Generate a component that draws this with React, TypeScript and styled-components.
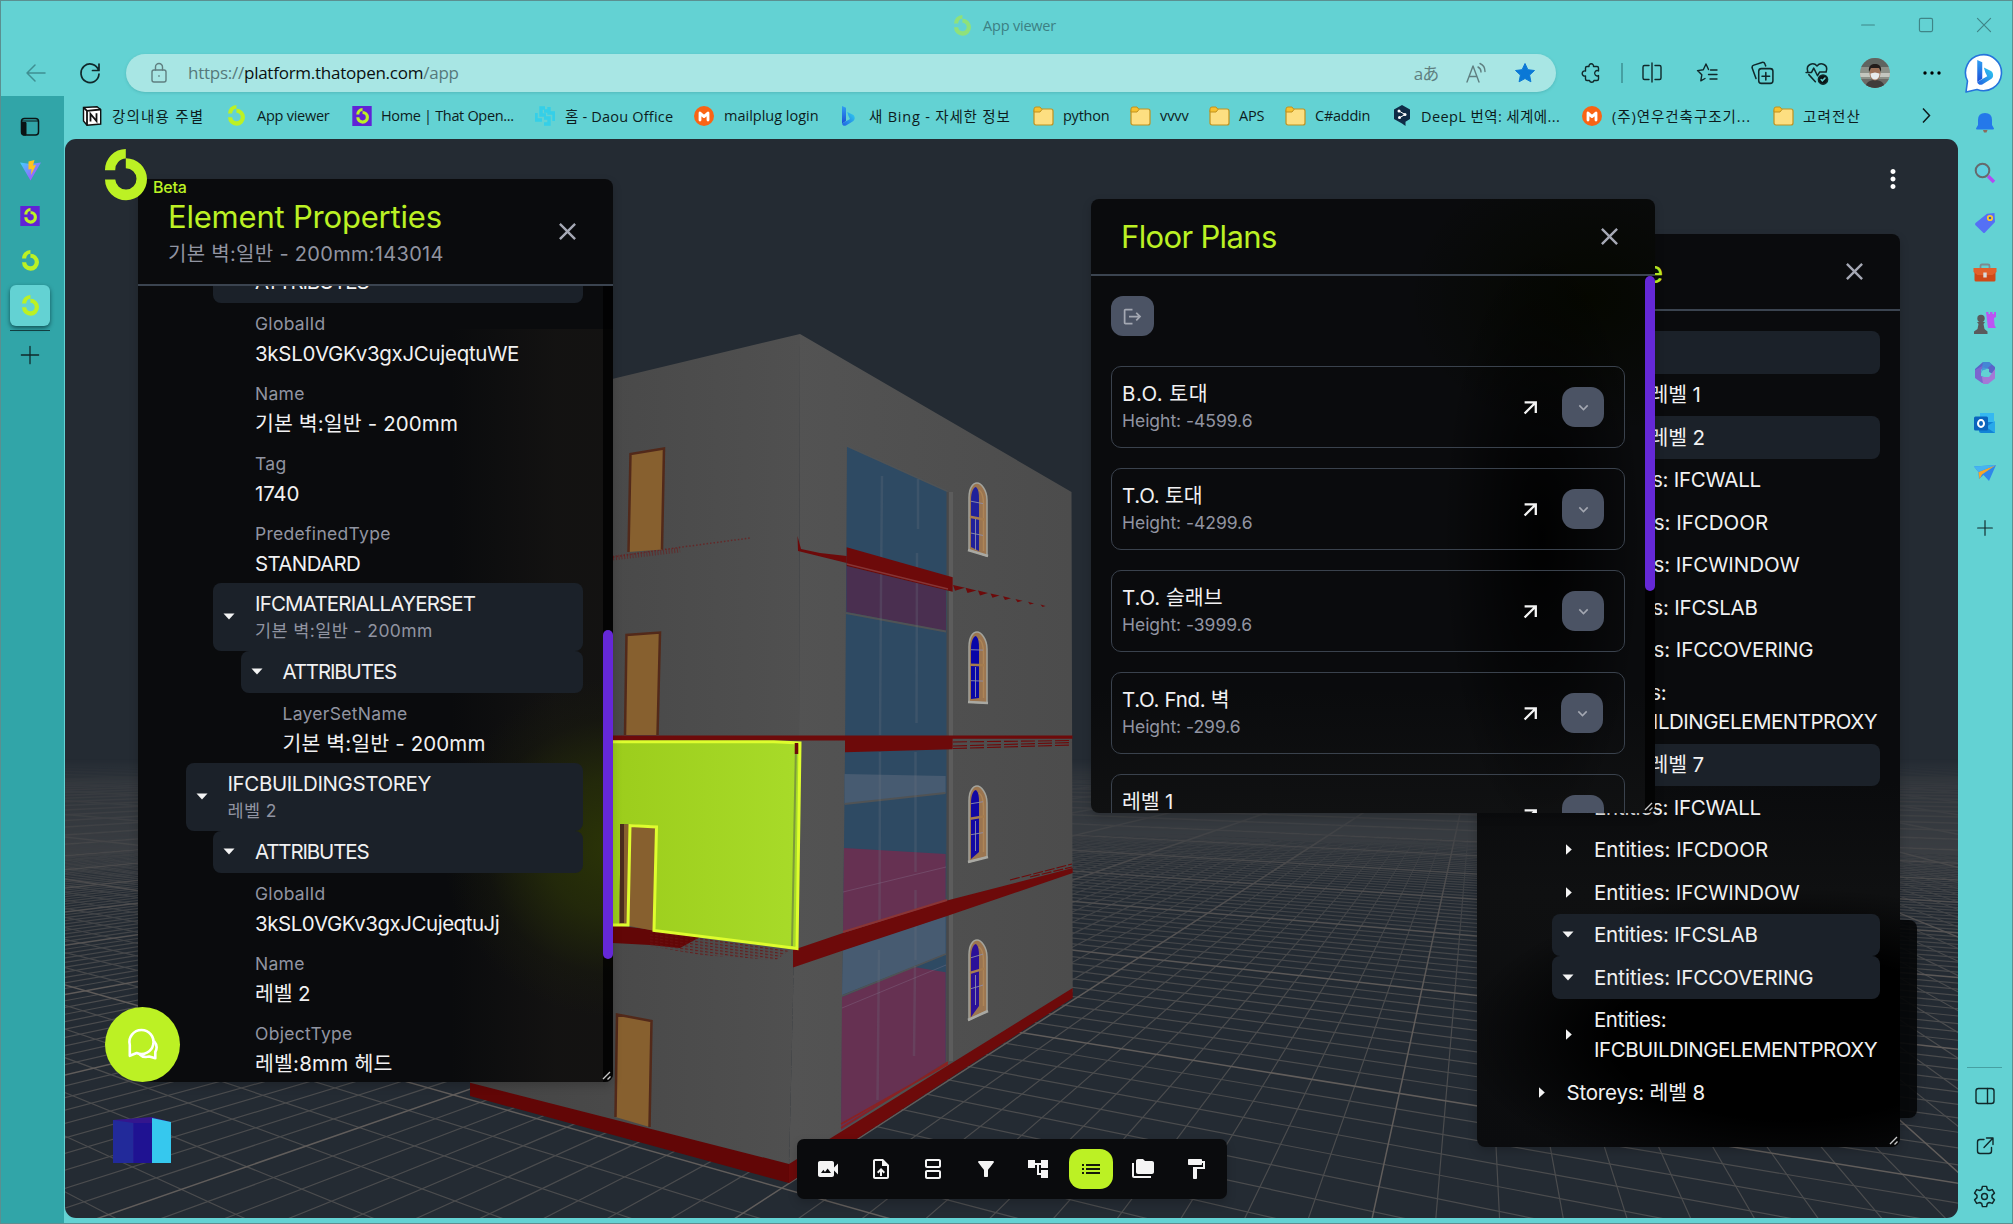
import React from 'react';
import styled, { createGlobalStyle, css } from 'styled-components';
import {
  MdVideoCameraBack, MdUploadFile, MdSplitscreen, MdFilterAlt, MdAccountTree,
  MdList, MdFolderCopy, MdFormatPaint, MdMoreVert, MdClose, MdLogout, MdKeyboardArrowDown,
} from 'react-icons/md';

const LIME = '#bcf124';
const TEAL = '#63d2d3';
const VIOLET = '#6528d7';
const UI = "'Open Sans', 'Noto Sans CJK KR', sans-serif";
const APP = "Inter, 'Noto Sans CJK KR', sans-serif";

const Global = createGlobalStyle`
  * { box-sizing: border-box; }
  body { margin: 0; background: ${TEAL}; }
`;

/* ---------- browser chrome ---------- */

const Browser = styled.div`
  width: 2013px;
  height: 1224px;
  display: flex;
  flex-direction: column;
  overflow: hidden;
  background: ${TEAL};
  border: 1px solid #5b8f90;
  font-family: ${UI};
  color: #0d1c1d;
`;

const TitleBar = styled.header`
  height: 48px;
  display: flex;
  align-items: center;
`;

const TitleLabel = styled.div`
  display: flex;
  align-items: center;
  gap: 10px;
  margin-left: 951px;
  width: 400px;
  font-size: 14.5px;
  letter-spacing: -0.2px;
  color: #3c8083;
  & > svg { opacity: 0.5; }
`;

const Slot = styled.div<{ $gap?: number; $w?: number }>`
  display: flex;
  align-items: center;
  justify-content: center;
  flex: none;
  margin-left: ${(p) => p.$gap ?? 0}px;
  width: ${(p) => p.$w ?? 24}px;
`;

const NavBar = styled.div`
  height: 47px;
  display: flex;
  align-items: center;
`;

const AddressBar = styled.div`
  display: flex;
  align-items: center;
  height: 38px;
  width: 1430px;
  margin-left: 24px;
  padding-right: 20px;
  border-radius: 19px;
  background: #a8e6e4;
  box-shadow: 0 1px 3px rgba(30, 110, 115, 0.25);
`;

const Url = styled.div`
  flex: 1;
  margin-left: 18px;
  font-size: 17px;
  letter-spacing: -0.25px;
  color: #56797b;
  white-space: nowrap;
  & > b { font-weight: 400; color: #0a0f10; }
`;

const Glyph = styled.span`
  font-size: 17px;
  color: #5f7f80;
  letter-spacing: -1px;
  white-space: nowrap;
`;

const NavDivider = styled.div`
  width: 1.5px;
  height: 20px;
  margin-left: 19px;
  background: #46a0a2;
`;

const Main = styled.div`
  flex: 1;
  min-height: 0;
  display: flex;
`;

const TabRail = styled.nav`
  width: 63px;
  flex: none;
  display: flex;
  flex-direction: column;
  align-items: center;
  padding: 10px 5px 0 0;
  background: #31a5a8;
`;

const TabSlot = styled.div<{ $h: number }>`
  height: ${(p) => p.$h}px;
  flex: none;
  display: flex;
  align-items: center;
  justify-content: center;
`;

const ActiveTab = styled.div`
  width: 40px;
  height: 41px;
  border-radius: 6px;
  display: flex;
  align-items: center;
  justify-content: center;
  background: ${TEAL};
  box-shadow: 0 2px 4px rgba(0, 40, 45, 0.65);
`;

const RailRule = styled.div<{ $w: number; $c: string }>`
  width: ${(p) => p.$w}px;
  height: 1px;
  flex: none;
  background: ${(p) => p.$c};
`;

const Center = styled.div`
  flex: 1;
  min-width: 0;
  display: flex;
  flex-direction: column;
  padding: 0 0 5px 1px;
`;

const Bookmarks = styled.div`
  height: 43px;
  flex: none;
  display: flex;
  align-items: center;
  padding: 0 0 4px 17px;
`;

const Bookmark = styled.div<{ $w: number; $gap?: number; $track?: number }>`
  width: ${(p) => p.$w}px;
  flex: none;
  display: flex;
  align-items: center;
  gap: ${(p) => p.$gap ?? 10}px;
  font-size: 14.5px;
  letter-spacing: ${(p) => p.$track ?? -0.25}px;
  white-space: nowrap;
  & > svg { flex: none; }
`;

const SideRail = styled.aside`
  width: 55px;
  flex: none;
  display: flex;
  flex-direction: column;
  align-items: center;
  padding: 2px 0 2px 0;
`;

const SideSlot = styled.div<{ $top?: number }>`
  height: 50px;
  margin-top: ${(p) => p.$top ?? 0}px;
  flex: none;
  display: flex;
  align-items: center;
  justify-content: center;
`;

const Grow = styled.div`flex: 1;`;

/* ---------- viewer ---------- */

const Viewport = styled.main`
  position: relative;
  flex: 1;
  width: 1893px;
  overflow: hidden;
  border-radius: 11px;
  background: #242b33;
  font-family: ${APP};
  color: #f1f1f2;
  & > svg { display: block; }
`;

type Box = { $x: number; $y: number; $w: number; $h: number; $fill?: string };

const Floating = styled.section<Box>`
  position: absolute;
  left: ${(p) => p.$x}px;
  top: ${(p) => p.$y}px;
  width: ${(p) => p.$w}px;
  height: ${(p) => p.$h}px;
  display: flex;
  flex-direction: column;
  overflow: hidden;
  border-radius: 8px;
  background: ${(p) => p.$fill ?? '#0a0b0d'};
  box-shadow: 0 4px 10px rgba(0, 0, 0, 0.18);
`;

const PanelHead = styled.div<{ $h: number }>`
  height: ${(p) => p.$h}px;
  flex: none;
  display: flex;
  align-items: center;
  justify-content: space-between;
  padding: 0 31px 0 30px;
  border-bottom: 2px solid #3b4450;
  & > svg { color: #a5a8b4; flex: none; }
`;

const PanelTitle = styled.h2<{ $track?: number }>`
  margin: 0;
  font-size: 31px;
  line-height: 38px;
  font-weight: 400;
  letter-spacing: ${(p) => p.$track ?? -0.2}px;
  color: ${LIME};
  white-space: nowrap;
`;

const PanelSub = styled.div`
  margin: 3px 0 -3px;
  font-size: 20px;
  line-height: 30px;
  letter-spacing: 0.3px;
  color: #9194a1;
  white-space: nowrap;
`;

const PanelMain = styled.div`
  flex: 1;
  min-height: 0;
  display: flex;
`;

const Scroller = styled.div<{ $pad: string }>`
  flex: 1;
  min-width: 0;
  overflow: hidden;
  padding: ${(p) => p.$pad};
`;

const Track = styled.div<{ $before: number }>`
  width: 10px;
  flex: none;
  padding-top: ${(p) => p.$before}px;
  background: rgba(0, 0, 0, 0.75);
`;

const Thumb = styled.div<{ $h: number }>`
  height: ${(p) => p.$h}px;
  border-radius: 5px;
  background: ${VIOLET};
`;

const Grip = styled.svg`
  position: absolute;
  right: 2px;
  bottom: 2px;
`;

const Content = styled.div<{ $shift: number }>`
  margin-top: ${(p) => p.$shift}px;
`;

const Row = styled.div<{ $level: number; $h: number; $on?: boolean }>`
  height: ${(p) => p.$h}px;
  margin-left: ${(p) => p.$level * 27.5}px;
  display: flex;
  align-items: center;
  border-radius: 8px;
  ${(p) => p.$on && css`background: #1b2129;`}
`;

const CaretBox = styled.span`
  width: 42px;
  padding-left: 10px;
  flex: none;
  display: flex;
`;

const Value = styled.div<{ $lh?: number; $track?: number }>`
  font-size: 20.5px;
  line-height: ${(p) => p.$lh ?? 29.5}px;
  letter-spacing: ${(p) => p.$track ?? -0.2}px;
  white-space: nowrap;
`;

const Label = styled.div<{ $lh?: number; $track?: number }>`
  font-size: 17.5px;
  line-height: ${(p) => p.$lh ?? 30}px;
  letter-spacing: ${(p) => p.$track ?? 0.3}px;
  color: #9194a1;
  white-space: nowrap;
`;

const Field = styled.div<{ $level: number }>`
  height: 70px;
  margin-left: ${(p) => p.$level * 27.5 + 42}px;
  padding-top: 5.5px;
`;

const ExitButton = styled.button`
  width: 43px;
  height: 40px;
  padding: 0;
  margin: 0 0 30px;
  border: 0;
  border-radius: 12px;
  display: flex;
  align-items: center;
  justify-content: center;
  background: #4b5364;
  color: #a4a8b2;
`;

const PlanCard = styled.div`
  height: 82px;
  margin-bottom: 20px;
  padding: 0 20px 0 10px;
  border: 1px solid #3a424d;
  border-radius: 10px;
  display: flex;
  align-items: center;
`;

const PlanText = styled.div`
  flex: 1;
`;

const ExpandButton = styled.button<{ $nudge?: boolean }>`
  width: 42px;
  height: 40px;
  padding: 0;
  border: 0;
  margin-left: ${(p) => (p.$nudge ? 23 : 24)}px;
  margin-right: ${(p) => (p.$nudge ? 1 : 0)}px;
  border-radius: 13px;
  display: flex;
  align-items: center;
  justify-content: center;
  background: #4b5364;
  color: #a4a8b2;
`;

const Dock = styled(Floating)`
  flex-direction: row;
  align-items: center;
  justify-content: center;
  border-radius: 7px;
`;

const DockButton = styled.button<{ $on?: boolean }>`
  width: 43.5px;
  height: 40px;
  margin: 0 4.5px;
  padding: 0;
  border: 0;
  border-radius: 13px;
  display: flex;
  align-items: center;
  justify-content: center;
  background: ${(p) => (p.$on ? LIME : 'transparent')};
  color: ${(p) => (p.$on ? '#15190a' : '#f4f4f4')};
`;

const Pin = styled.div<{ $x: number; $y: number }>`
  position: absolute;
  left: ${(p) => p.$x}px;
  top: ${(p) => p.$y}px;
  display: flex;
`;

const BetaTag = styled(Pin)`
  font-size: 16px;
  line-height: 20px;
  font-weight: 500;
  letter-spacing: -0.2px;
  color: ${LIME};
`;

const ChatButton = styled.button`
  width: 75px;
  height: 75px;
  padding: 0;
  border: 0;
  border-radius: 50%;
  background: ${LIME};
  display: flex;
  align-items: center;
  justify-content: center;
`;

/* ---------- drawings ---------- */

const Ring = ({ size, color = LIME, bg }: { size: number; color?: string; bg?: string }) => (
  <svg width={size} height={size} viewBox={bg ? '-8 -7 64 66' : '0 0 52 52'}>
    {bg && <rect x="-8" y="-7" width="64" height="66" fill={bg} />}
    <g fill={color} transform="translate(5 0)">
      <path d="M20.8 9.2A21 21 0 1 1 0 30.4H10.3A10.6 10.6 0 1 0 20.8 19.3Z" />
      <path d="M0 21.2A20.8 21 0 0 1 20.8 0V9.4A10.6 11.2 0 0 0 10.3 21.2Z" />
    </g>
  </svg>
);

const Folder = () => (
  <svg width="21" height="20" viewBox="0 0 21 20">
    <rect x="1" y="3" width="19" height="16" rx="2" fill="#fddf81" stroke="#c1921e" strokeWidth="1.2" />
    <path d="M1 6V3a2 2 0 0 1 2-2h4l2 2.5L7 6Z" fill="#f7c12f" stroke="#c1921e" />
  </svg>
);

const MailM = () => (
  <svg width="20" height="20" viewBox="0 0 20 20">
    <circle cx="10" cy="10" r="10" fill="#fa6414" />
    <path d="M6 14V7l4 3.6L14 7v7" fill="none" stroke="#fff" strokeWidth="2.8" strokeLinejoin="round" strokeLinecap="round" />
  </svg>
);

const Line = ({ s = 22, w = 1.4, c = '#10282a', children }: { s?: number; w?: number; c?: string; children: React.ReactNode }) => (
  <svg width={s} height={s} viewBox="0 0 22 22" fill="none" stroke={c} strokeWidth={w} strokeLinecap="round" strokeLinejoin="round">
    {children}
  </svg>
);

const BingB = ({ size }: { size: number }) => (
  <svg width={size * 0.7} height={size} viewBox="0 0 14 20">
    <defs>
      <linearGradient id="bA" x1="0" y1="0" x2="0" y2="1"><stop offset="0" stopColor="#2f9ff2" /><stop offset="1" stopColor="#1b4fd8" /></linearGradient>
      <linearGradient id="bB" x1="0" y1="1" x2="1" y2="0"><stop offset="0" stopColor="#2160e2" /><stop offset="1" stopColor="#2fd0f0" /></linearGradient>
    </defs>
    <path d="M1 0 5 1.8V15L1 17.5Z" fill="url(#bA)" />
    <path d="M6.3 6 12 8.8c2 1.2 2.4 4.6.4 6.2L5 19.6c-2 .8-3.6-.4-4-2.1L9 13 7.4 9.8Z" fill="url(#bB)" />
  </svg>
);

const CaretDown = () => <svg width="12" height="7" viewBox="0 0 12 7"><path d="M.5.5h11L6 6.5Z" fill="#f4f4f4" /></svg>;
const CaretRight = () => <svg width="12" height="11" viewBox="0 0 12 11"><path d="M4 .2v10.6L9.8 5.5Z" fill="#f4f4f4" /></svg>;
const ArrowNE = () => (
  <svg width="15" height="15" viewBox="0 0 15 15" fill="none" stroke="#f4f4f4" strokeWidth="2.3">
    <path d="M1.6 2.3H12.8V13M12.6 2.5 1.6 13.5" />
  </svg>
);
const GripIcon = () => (
  <Grip width="9" height="9" viewBox="0 0 9 9" stroke="#c9c9c9" strokeWidth="1.4"><path d="M1 8 8 1M5.5 8.5l3-3" /></Grip>
);

type Pt = [number, number];
const poly = (pts: Pt[]) => pts.map((p) => p.join(',')).join(' ');

const HORIZON = 740;
const BASE = 1219;

const fan = (vx: number, start: number, step: number, from: number, to: number, skip?: number) => {
  let d = '';
  for (let k = from; k <= to; k += 1) {
    if (skip && k % skip === 0) continue;
    const x = start + k * step;
    const t = 0.03;
    d += `M${(vx + (x - vx) * t).toFixed(1)} ${(HORIZON + (BASE - HORIZON) * t).toFixed(1)}L${x.toFixed(1)} ${BASE}`;
  }
  return d;
};

const gridMinorA = fan(1476, 96, 63.8, -250, 300, 10);
const gridMajorA = fan(1476, 96, 638, -25, 30);
const gridMinorB = fan(-800, 891, 129, -14, 260, 10);
const gridMajorB = fan(-800, 891, 1290, -1, 26);

const ArchWindow = ({ y, h, tilt, tint }: { y: number; h: number; tilt: number; tint: string }) => (
  <g transform={`translate(968 ${y})`}>
    <path d={`M1 ${h - tilt}V16C1 6 5 1 9 1S19 8 19 18V${h}Z`} fill="#9b7550" stroke="#a3a39b" strokeWidth="1.5" />
    <path d={`M3 ${h - tilt - 3}V18C3 9 6 5 8 5 11 8 11 12 11 20V${h - 5}Z`} fill={tint} />
    <path d={`M11 8C15 11 15.500 16 15.500 22V${h - 5}`} fill="none" stroke="#ad8557" strokeWidth="1.5" />
    <path d={`M2 ${h * 0.47}l15 ${tilt * 0.5}`} stroke="#a57c4f" strokeWidth="2.5" />
    <path d={`M3 ${h * 0.26}l12 ${tilt * 0.4}M3 ${h * 0.69}l12 ${tilt * 0.4}M7.500 ${h * 0.5}V${h - 6}`} stroke="#8f8da8" strokeWidth="0.9" fill="none" />
    <path d={`M0 ${h - tilt}L20 ${h}`} stroke="#a9a9a3" strokeWidth="2.5" />
  </g>
);

const Door = ({ pts }: { pts: Pt[] }) => (
  <g>
    <polygon points={poly(pts)} fill="#87602f" />
    <polyline points={poly([pts[3], pts[0], pts[1], pts[2]])} fill="none" stroke="#52291a" strokeWidth="2.5" />
  </g>
);

const Scene = () => (
  <svg width="1893" height="1080" viewBox="65 139 1893 1080">
    <defs>
      <linearGradient id="fog" x1="0" y1="740" x2="0" y2="1219" gradientUnits="userSpaceOnUse">
        <stop offset="0.04" stopColor="#fff" stopOpacity="0" />
        <stop offset="0.1" stopColor="#fff" stopOpacity="0.3" />
        <stop offset="0.25" stopColor="#fff" stopOpacity="0.6" />
        <stop offset="0.55" stopColor="#fff" stopOpacity="1" />
      </linearGradient>
      <mask id="fogMask" maskUnits="userSpaceOnUse" x="65" y="740" width="1893" height="480">
        <rect x="65" y="740" width="1893" height="480" fill="url(#fog)" />
      </mask>
      <linearGradient id="wallL" x1="470" y1="0" x2="800" y2="0" gradientUnits="userSpaceOnUse">
        <stop offset="0" stopColor="#444" /><stop offset="1" stopColor="#505050" />
      </linearGradient>
      <linearGradient id="wallR" x1="793" y1="0" x2="1072" y2="0" gradientUnits="userSpaceOnUse">
        <stop offset="0" stopColor="#535353" /><stop offset="1" stopColor="#4c4c4c" />
      </linearGradient>
      <linearGradient id="sel" x1="613" y1="0" x2="800" y2="0" gradientUnits="userSpaceOnUse">
        <stop offset="0" stopColor="#9ccd1c" /><stop offset="1" stopColor="#a8db29" />
      </linearGradient>
      <pattern id="dots" width="5" height="3" patternUnits="userSpaceOnUse" patternTransform="skewY(8)">
        <rect width="3" height="1.2" fill="#6a1212" fillOpacity="0.8" />
      </pattern>
    </defs>
    <g mask="url(#fogMask)" fill="none">
      <path d={gridMinorA} stroke="#4b4c4e" strokeWidth="1.2" />
      <path d={gridMinorB} stroke="#4b4c4e" strokeWidth="1.2" />
      <path d={gridMajorA} stroke="#615d5b" strokeWidth="1.5" />
      <path d={gridMajorB} stroke="#615d5b" strokeWidth="1.5" />
    </g>

    {/* walls */}
    <polygon points="470,413 800,334 799,740 789,1168 470,1085" fill="url(#wallL)" />
    <polygon points="800,334 1071.5,492 1072.7,992 789,1170 799,740" fill="url(#wallR)" />

    {/* plinth */}
    <polygon points="470,1082.7 789,1164 789,1183 470,1096" fill="#620606" />
    <polygon points="789,1164 1072.7,988 1072.7,998 789,1183" fill="#6d0a0a" />

    {/* curtain wall */}
    <polygon points="847,446 948,491 946,1062 841,1130 845,752" fill="#2e4a63" />
    <polygon points="846.5,612 846.5,566 946,590 946,631" fill="#4a2f50" />
    <polygon points="844.5,774 945.6,776 945.6,793 844.5,804" fill="#475b71" />
    <polygon points="844,848 945.6,854 945.6,902 843,933" fill="#663152" />
    <polygon points="843,950 945.6,916 945.6,954 842,995" fill="#475b71" />
    <polygon points="842,997 914,967 945.6,972.3 945.6,1062 841,1130" fill="#663152" />
    <g stroke="#505355" strokeWidth="1.8" fill="none">
      <path d="M847 446 948 491.5M846 613l100 18.5M844.5 804l101-11M842 996l104-42" />
    </g>
    <g stroke="#6a7480" strokeOpacity="0.25" strokeWidth="2.5" fill="none">
      <path d="M882 476 881 590 880 735M918 479v50M917 553l-.5 170M880 752l-.5 180M915.5 752v120M915.5 890v70M879 950l-1.5 150M915 966l-1 90" />
    </g>
    <path d="M842 1008 946 965M843 892 946 867" stroke="#8c7a93" strokeOpacity="0.4" strokeWidth="0.8" />
    <path d="M951 492V1061" stroke="#5c5c5c" strokeWidth="4" />
    <path d="M947.5 492V1061" stroke="#48484a" strokeWidth="2" />
    <path d="M841 1128 948 1062M841 1124 948 1064" stroke="#8a2222" strokeWidth="1.5" />

    {/* slab edges */}
    <polygon points="846.7,547.3 952.7,577.3 952.7,591.7 846.7,566" fill="#6d0a0a" />
    <path d="M846.7 564 948 589" stroke="#853535" strokeWidth="1.5" />
    <path d="M797.5 536 801 549 820 553 846.7 556v7L798 551Z" fill="#6d0a0a" />
    {[0, 1, 2, 3, 4, 5, 6, 7].map((i) => (
      <path key={i} d={`M${953 + i * 12.5} ${585 + i * 2.8}l${12 - i} ${2.8 - i * 0.2}l-${10 - i} ${3 - i * 0.3}Z`} fill="#6d0a0a" />
    ))}
    <path d="M613 557 660 550 750 538" stroke="#6e1a1a" strokeOpacity="0.7" strokeWidth="1.5" strokeDasharray="1.5 2" fill="none" />
    <path d="M613 558 680 550" stroke="#6e1a1a" strokeWidth="5" strokeDasharray="1 1.8" fill="none" strokeOpacity="0.6" />
    <path d="M613 735.5H1072.5V738.7H952.7V749.3L845 752.3V740.5H613Z" fill="#6d0a0a" />
    <path d="M953 742 1072 740.5M953 746 1072 742.5M953 748.5 1072 745" stroke="#6d0a0a" strokeWidth="1.1" strokeDasharray="14 3" fill="none" />
    <polygon points="793,950 843,933 947,900.5 1072.7,868 1072.7,873 947,916 843,950.5 793,967.5" fill="#6d0a0a" />
    <path d="M843 932 947 900" stroke="#8a3535" strokeWidth="2" />
    <path d="M1010 880 1072 864M1030 877 1072 867" stroke="#6d0a0a" strokeWidth="1.2" strokeDasharray="10 2" />
    <polygon points="613,925 654,930 700,937 680,948 650,945 613,943" fill="#620606" />
    <polygon points="650,931 790,950 776,960 700,955 650,946" fill="url(#dots)" />

    <Door pts={[[630.5, 454], [664, 448.5], [662, 549.5], [628.5, 552]]} />
    <Door pts={[[626.5, 635], [660, 632.5], [657.5, 735], [625, 735]]} />
    <Door pts={[[617, 1014.5], [651.5, 1021], [649.5, 1127], [615.5, 1117]]} />

    {/* selected wall */}
    <path d="M600 742H800L797 948.5 654 930.7 656 826 621 824 619 924 600 924Z" fill="url(#sel)" />
    <polygon points="621,824 656,826 653.5,930.7 619,924" fill="#87602f" />
    <path d="M622 824V923" stroke="#4a2c1c" strokeWidth="4" />
    <path d="M796 745 792 946" stroke="#7d9b3a" strokeWidth="2" />
    <path d="M600 741.7H774L800 743 797 948.5 654 930.5 656.5 827 630 825.5 628 925H600" fill="none" stroke="#defd2e" strokeWidth="3" />
    <path d="M796.5 743v11" stroke="#6d0a0a" strokeWidth="3.5" />

    <ArchWindow y={482} h={74} tilt={6} tint="#20209a" />
    <ArchWindow y={631} h={72} tilt={1} tint="#0805a8" />
    <ArchWindow y={785} h={72} tilt={-5} tint="#1208a4" />
    <ArchWindow y={939} h={72} tilt={-9} tint="#2a1099" />
  </svg>
);

/* ---------- data ---------- */

const plans: [string, string, number][] = [
  ['B.O. 토대', '-4599.6', 0.5],
  ['T.O. 토대', '-4299.6', -0.2],
  ['T.O. 슬래브', '-3999.6', 0],
  ['T.O. Fnd. 벽', '-299.6', -0.3],
  ['레벨 1', '0', -0.2],
];

const tree: { lines: string[]; level: number; on?: boolean; open?: boolean; track?: number }[] = [
  { lines: ['Buildings'], level: 0, on: true, open: true },
  { lines: ['Storeys: 레벨 1'], level: 1 },
  { lines: ['Storeys: 레벨 2'], level: 1, on: true, open: true },
  { lines: ['Entities: IFCWALL'], level: 2, track: -0.25 },
  { lines: ['Entities: IFCDOOR'], level: 2, track: 0 },
  { lines: ['Entities: IFCWINDOW'], level: 2, track: -0.05 },
  { lines: ['Entities: IFCSLAB'], level: 2 },
  { lines: ['Entities: IFCCOVERING'], level: 2, track: -0.05 },
  { lines: ['Entities:', 'IFCBUILDINGELEMENTPROXY'], level: 2, track: -0.48 },
  { lines: ['Storeys: 레벨 7'], level: 1, on: true, open: true },
  { lines: ['Entities: IFCWALL'], level: 2, track: -0.25 },
  { lines: ['Entities: IFCDOOR'], level: 2, track: 0 },
  { lines: ['Entities: IFCWINDOW'], level: 2, track: -0.05 },
  { lines: ['Entities: IFCSLAB'], level: 2, on: true, open: true },
  { lines: ['Entities: IFCCOVERING'], level: 2, on: true, open: true, track: -0.05 },
  { lines: ['Entities:', 'IFCBUILDINGELEMENTPROXY'], level: 2, track: -0.48 },
  { lines: ['Storeys: 레벨 8'], level: 1 },
];

const Group = ({ level, title, sub, track = -1.15 }: { level: number; title: string; sub?: string; track?: number }) => (
  <Row $level={level} $h={sub ? 67.5 : 42.5} $on>
    <CaretBox><CaretDown /></CaretBox>
    <div>
      <Value $lh={sub ? 28 : undefined} $track={track}>{title}</Value>
      {sub && <Label $lh={25} $track={0.4}>{sub}</Label>}
    </div>
  </Row>
);

const Prop = ({ level, name, value, track }: { level: number; name: string; value: string; track?: number }) => (
  <Field $level={level}>
    <Label>{name}</Label>
    <Value $track={track}>{value}</Value>
  </Field>
);

const elementFill = `
  radial-gradient(ellipse 170px 170px at 100% 74%, rgba(44, 54, 6, 0.95), rgba(40, 48, 8, 0.75) 40%, rgba(30, 34, 10, 0.25) 75%, transparent),
  linear-gradient(90deg, transparent 66%, rgba(20, 19, 18, 0.9) 88%) 0 150px no-repeat,
  #0a0b0d`;
const treeFill = `
  radial-gradient(ellipse 330px 150px at 74% 88%, #000 55%, transparent),
  linear-gradient(#0a0b0d 60%, #0f1011 72%, #0b0c0e)`;
const floorFill = `
  radial-gradient(ellipse 100px 300px at 80% 55%, rgba(0, 0, 0, 0.9), transparent),
  radial-gradient(ellipse 180px 140px at 88% 16%, #050700, transparent),
  linear-gradient(#0a0b0d 80%, #101112)`;

const ElementProperties = () => (
  <Floating $x={73} $y={40} $w={475} $h={903} $fill={elementFill}>
    <PanelHead $h={107}>
      <div>
        <PanelTitle>Element Properties</PanelTitle>
        <PanelSub>기본 벽:일반 - 200mm:143014</PanelSub>
      </div>
      <MdClose size={29} />
    </PanelHead>
    <PanelMain>
      <Scroller $pad="0 20.5px 0 47.5px">
        <Content $shift={-25.5}>
          <Group level={1} title="ATTRIBUTES" />
          <Prop level={1} name="GlobalId" value="3kSL0VGKv3gxJCujeqtuWE" track={-0.3} />
          <Prop level={1} name="Name" value="기본 벽:일반 - 200mm" track={0.12} />
          <Prop level={1} name="Tag" value="1740" />
          <Prop level={1} name="PredefinedType" value="STANDARD" track={-0.65} />
          <Group level={1} title="IFCMATERIALLAYERSET" sub="기본 벽:일반 - 200mm" track={-0.82} />
          <Group level={2} title="ATTRIBUTES" />
          <Prop level={2} name="LayerSetName" value="기본 벽:일반 - 200mm" track={0.12} />
          <Group level={0} title="IFCBUILDINGSTOREY" sub="레벨 2" track={-0.4} />
          <Group level={1} title="ATTRIBUTES" />
          <Prop level={1} name="GlobalId" value="3kSL0VGKv3gxJCujeqtuJj" track={-0.48} />
          <Prop level={1} name="Name" value="레벨 2" />
          <Prop level={1} name="ObjectType" value="레벨:8mm 헤드" track={0.2} />
        </Content>
      </Scroller>
      <Track $before={344}><Thumb $h={329} /></Track>
    </PanelMain>
    <GripIcon />
  </Floating>
);

const FloorPlans = () => (
  <Floating $x={1026} $y={60} $w={563.5} $h={614} $fill={floorFill}>
    <PanelHead $h={77}>
      <PanelTitle $track={-0.65}>Floor Plans</PanelTitle>
      <MdClose size={29} />
    </PanelHead>
    <PanelMain>
      <Scroller $pad="20px 19.5px 0 20px">
        <ExitButton><MdLogout size={21} /></ExitButton>
        {plans.map(([name, height, track], i) => (
          <PlanCard key={name}>
            <PlanText>
              <Value $lh={28} $track={track}>{name}</Value>
              <Label $lh={26} $track={-0.03}>Height: {height}</Label>
            </PlanText>
            <ArrowNE />
            <ExpandButton $nudge={i === 3}><MdKeyboardArrowDown size={19} /></ExpandButton>
          </PlanCard>
        ))}
      </Scroller>
      <Track $before={0}><Thumb $h={315} /></Track>
    </PanelMain>
    <GripIcon />
  </Floating>
);

const SpatialTree = () => (
  <Floating $x={1412} $y={95} $w={423} $h={913} $fill={treeFill}>
    <PanelHead $h={77}>
      <PanelTitle $track={-1.55}>Spatial Tree</PanelTitle>
      <MdClose size={29} />
    </PanelHead>
    <PanelMain>
      <Scroller $pad="20px 20px 0">
        {tree.map((node, i) => (
          <Row key={i} $level={node.level} $h={node.lines.length > 1 ? 72.5 : 42.5} $on={node.on}>
            <CaretBox>{node.open ? <CaretDown /> : <CaretRight />}</CaretBox>
            <div>{node.lines.map((l) => <Value key={l} $track={node.track}>{l}</Value>)}</div>
          </Row>
        ))}
      </Scroller>
    </PanelMain>
    <GripIcon />
  </Floating>
);

const dock = [MdVideoCameraBack, MdUploadFile, MdSplitscreen, MdFilterAlt, MdAccountTree, MdList, MdFolderCopy, MdFormatPaint];

const Viewer = () => (
  <Viewport>
    <Scene />
    <Floating $x={1440} $y={781} $w={412} $h={198} $fill="rgba(4, 5, 7, 0.9)" />
    <SpatialTree />
    <FloorPlans />
    <ElementProperties />
    <Dock $x={732} $y={1000} $w={430} $h={60}>
      {dock.map((Icon, i) => (
        <DockButton key={i} $on={i === 5}><Icon size={24} /></DockButton>
      ))}
    </Dock>
    <Pin $x={35} $y={9.5}><Ring size={52} /></Pin>
    <BetaTag $x={88} $y={38}>Beta</BetaTag>
    <Pin $x={1813} $y={25}><MdMoreVert size={30} color="#fff" /></Pin>
    <Pin $x={40} $y={867.5}>
      <ChatButton>
        <svg width="34" height="34" viewBox="0 0 34 34" fill="none" stroke="#fff" strokeWidth="2.6" strokeLinejoin="round">
          <path d="M15.5 3a12 12 0 1 1-4.8 23L3.800 28.800V18A12 12 0 0 1 15.5 3Z" />
          <path d="M28 14c3 3.5 3.3 7.5 1.3 11v6.2l-6-1.6c-4 1-7.3.2-9.5-2.100" />
        </svg>
      </ChatButton>
    </Pin>
    <Pin $x={48} $y={977.5}>
      <svg width="58" height="48" viewBox="0 0 58 48">
        <path d="M0 3 39 0 58 5V46H0Z" fill="#34168e" />
        <path d="M0 3 20.5 6V46H0Z" fill="#222a9a" />
        <path d="M20.5 6H39V46H20.5Z" fill="#1f1292" />
        <path d="M39 1 58 5V46H39Z" fill="#36c8ee" />
      </svg>
    </Pin>
  </Viewport>
);

/* ---------- chrome pieces ---------- */

const Navigation = () => (
  <NavBar>
    <Slot $gap={23}><Line c="#3f8f92" w={1.5}><path d="M2 11h18M10 3 2 11l8 8" /></Line></Slot>
    <Slot $gap={30}><Line w={1.7}><path d="M19.6 8.500A9 9.3 0 1 0 20 12M20 2v6.5h-6.500" /></Line></Slot>
    <AddressBar>
      <Slot $gap={22} $w={22}>
        <Line c="#5f7f80"><rect x="4" y="8" width="14" height="12" rx="2" /><path d="M7.5 8V5a3.5 3.5 0 0 1 7 0v3M11 13.800v.4" /></Line>
      </Slot>
      <Url>https://<b>platform.thatopen.com</b>/app</Url>
      <Slot><Glyph>aあ</Glyph></Slot>
      <Slot $gap={26}>
        <Line c="#5f7f80"><path d="M2 20 8 4l6 16M4.5 14.5h7M13 5c2 1 3 3 3 5M15 1.500c3.500 1.500 5 4.500 5 8" /></Line>
      </Slot>
      <Slot $gap={26} $w={22}>
        <svg width="22" height="22" viewBox="0 0 22 22"><path d="M11 1.5l2.9 6.2 6.600.8-4.900 4.600 1.300 6.700L11 16.5l-5.9 3.3 1.300-6.700L1.500 8.500l6.600-.8Z" fill="#0a78d6" stroke="#0a78d6" strokeLinejoin="round" /></svg>
      </Slot>
    </AddressBar>
    <Slot $gap={24} $w={22}>
      <Line><path d="M7 4.500h2a2.300 2.300 0 1 1 4.500 0H17q1.500 0 1.500 1.500v3a2.600 2.600 0 1 0 0 4.500V17q0 1.500-1.500 1.500h-3a2.300 2.300 0 0 1-4.500 0H7q-1.500 0-1.500-1.500v-3a2.600 2.600 0 1 1 0-5V6q0-1.500 1.500-1.500Z" /></Line>
    </Slot>
    <NavDivider />
    <Slot $gap={18} $w={22}><Line><path d="M8 3.500H3.500Q2 3.500 2 5v11q0 1.500 1.500 1.500H8M14 3.500h4.500Q20 3.500 20 5v11q0 1.500-1.500 1.500H14M11 1v19" /></Line></Slot>
    <Slot $gap={33} $w={22}><Line><path d="M12.500 7.500 10 2 7.300 7.800 1.500 8.600l4.300 4.200-1 6L9 16.500M14.500 8H21M12.500 12.500H21M14 17h7" /></Line></Slot>
    <Slot $gap={32} $w={24}><Line s={24}><rect x="8" y="7" width="13" height="13.500" rx="2.500" /><path d="M14.500 10.500v7M11 14h7M5.500 16 2 6.500Q1.500 4.500 3.500 3.800l7.500-2.500Q13 .8 13.800 3l.600 1.500" /></Line></Slot>
    <Slot $gap={31} $w={24}>
      <Line s={24}>
        <path d="M2.500 9.500C.5 3.500 7.500.5 11 4.500 14.500.5 21.500 3.500 19.500 9.500M3.500 12.500l6 6.500M1 10.500h5l2-4 3.500 7 2-3.500h6" />
        <circle cx="16.500" cy="17" r="4.200" fill="#0a1415" /><path d="m14.800 17 1.200 1.200 2.300-2.500" stroke={TEAL} />
      </Line>
    </Slot>
    <Slot $gap={31} $w={30}>
      <svg width="30" height="30" viewBox="0 0 30 30">
        <clipPath id="av"><circle cx="15" cy="15" r="15" /></clipPath>
        <g clipPath="url(#av)">
          <rect width="30" height="30" fill="#8d9088" /><rect width="30" height="9" fill="#5f6460" /><rect y="15" width="30" height="4" fill="#c4c6bf" /><rect y="21" width="30" height="9" fill="#6c6a66" />
          <path d="M5 30c1-6 5-8 10-8s9 2 10 8Z" fill="#403c3b" />
          <ellipse cx="15" cy="15" rx="5.5" ry="7.5" fill="#9c7159" /><path d="M9 14c-1-7 3-8 6-8s7 1 6 8l-2-4h-8Z" fill="#221c1a" />
          <path d="M10.500 15.500 15 14.500l4.500 1c0 4-2 6-4.500 6s-4.500-2-4.500-6Z" fill="#e7ecef" />
        </g>
      </svg>
    </Slot>
    <Slot $gap={31} $w={22}><svg width="18" height="4" viewBox="0 0 18 4"><circle cx="2" cy="2" r="1.7" /><circle cx="9" cy="2" r="1.7" /><circle cx="16" cy="2" r="1.7" /></svg></Slot>
    <Slot $gap={21} $w={40}>
      <svg width="40" height="40" viewBox="0 0 40 40">
        <path d="M2 39 3.500 28A18 18 0 1 1 13 36.500Z" fill="#fff" stroke="#2574dc" strokeWidth="1.6" strokeLinejoin="round" />
        <g transform="translate(12 7)"><BingB size={25} /></g>
      </svg>
    </Slot>
  </NavBar>
);

const BookmarkBar = () => (
  <Bookmarks>
    <Bookmark $w={144} $track={1.2}>
      <svg width="20" height="20" viewBox="0 0 20 20"><path d="M1.500 1.500 15 .8l3.700 2.700V18L5 19.200 1.500 15Z" fill="#fff" stroke="#111" strokeWidth="1.4" /><path d="M1.500 1.500 5 4.800 18.700 3.500M5 4.800v14.400M8.500 15.500V8l6 7V7.300" fill="none" stroke="#111" strokeWidth="1.8" /></svg>
      강의내용 주별
    </Bookmark>
    <Bookmark $w={126}><Ring size={21} />App viewer</Bookmark>
    <Bookmark $w={183} $gap={9} $track={-0.33}><Ring size={20} bg="#6023d6" />Home | That Open...</Bookmark>
    <Bookmark $w={159} $track={0.2}>
      <svg width="20" height="20" viewBox="0 0 20 20" fill="none" stroke="#35cfe8" strokeWidth="3.4"><path d="M10 2H6v7h5M1 7v7h6M14 1v6h5v8M9 12h5v6H9M9 5h5" /></svg>
      홈 - Daou Office
    </Bookmark>
    <Bookmark $w={147} $track={0}><MailM />mailplug login</Bookmark>
    <Bookmark $w={192} $gap={14} $track={0.8}><BingB size={20} />새 Bing - 자세한 정보</Bookmark>
    <Bookmark $w={97} $gap={9}><Folder />python</Bookmark>
    <Bookmark $w={79} $gap={9} $track={-0.1}><Folder />vvvv</Bookmark>
    <Bookmark $w={76} $gap={9}><Folder />APS</Bookmark>
    <Bookmark $w={108} $gap={9}><Folder />C#addin</Bookmark>
    <Bookmark $w={189} $track={0.4}>
      <svg width="18" height="21" viewBox="0 0 18 21"><path d="M9 0l8 4.500v9.500l-4.500 2.800V21L9 18.500 1 14V4.500Z" fill="#0f2b46" /><path d="m6 6 6 3.500-5 3" fill="none" stroke="#fff" /><g fill="#fff"><circle cx="6" cy="6" r="1.5" /><circle cx="12" cy="9.5" r="1.5" /><circle cx="6.5" cy="12.5" r="1.5" /></g></svg>
      DeepL 번역: 세계에...
    </Bookmark>
    <Bookmark $w={191} $track={0.95}><MailM />(주)연우건축구조기...</Bookmark>
    <Bookmark $w={146} $gap={9} $track={1.2}><Folder />고려전산</Bookmark>
    <Slot $w={14}><svg width="9" height="15" viewBox="0 0 9 15" fill="none" stroke="#0c1a1b" strokeWidth="1.5"><path d="m1 .5 6.500 7-6.500 7" /></svg></Slot>
  </Bookmarks>
);

const Sidebar = () => (
  <SideRail>
    <SideSlot>
      <svg width="20" height="22" viewBox="0 0 20 22"><path d="M8 18h4.500l-1 2.500h-2.500Z" fill="#8b6b5c" /><path d="M1 16.500 3 13V8q0-7 7-7t7 7v5l2 3.500q0 1-1 1H2q-1 0-1-1Z" fill="#2478ea" /></svg>
    </SideSlot>
    <SideSlot>
      <svg width="22" height="22" viewBox="0 0 22 22"><path d="m14 14 6 6" stroke="#b14cf2" strokeWidth="3.5" /><circle cx="8.5" cy="8.5" r="6.8" fill="#5fd0e0" stroke="#666a6c" strokeWidth="2" /></svg>
    </SideSlot>
    <SideSlot>
      <svg width="22" height="22" viewBox="0 0 22 22"><path d="M1.500 11 13 1.800 20.500 1 21 10 11 20.500q-1 1-2 0L1.300 13Q.7 12 1.500 11Z" fill="#5570f5" /><circle cx="16" cy="6" r="2.2" fill="#3a50c8" stroke="#ffc928" strokeWidth="1.8" /></svg>
    </SideSlot>
    <SideSlot>
      <svg width="24" height="20" viewBox="0 0 24 20"><path d="M7.500 6V3q0-1.500 1.500-1.500h6q1.500 0 1.500 1.500v3" fill="none" stroke="#7f8a8e" strokeWidth="1.8" /><rect x="1.5" y="5" width="21" height="13.5" rx="1.5" fill="#cf4a18" /><path d="M.5 5h23v4l-4 3H4.500L.5 9Z" fill="#e2602a" /><rect x="10.3" y="9.5" width="3.4" height="5" fill="#d9dcdd" /></svg>
    </SideSlot>
    <SideSlot>
      <svg width="24" height="24" viewBox="0 0 24 24"><path d="M13 1h2.500v2H17V1h2.500v2H21V1h2v5l-2 1 .5 7 1.500 3h-8Z" fill="#bb55f3" /><circle cx="8" cy="7.5" r="3.7" fill="#5a5a5c" /><path d="M4 11h8l-1.500 2 1 5 3 2.500V23H1v-2.500L4.500 18l1-5Z" fill="#5a5a5c" /></svg>
    </SideSlot>
    <SideSlot>
      <svg width="22" height="24" viewBox="0 0 22 24"><path d="M9 1h6l6 5v8l-6-3V8L8 6 4 16 1 15V8Z" fill="#5a63c8" /><path d="M1 9v8l7 5h6l-1-5-6-2V9l5-6Z" fill="#7b66cf" /><path d="m21 8-6 8H8l1 7h5l7-5.500Z" fill="#a478d6" /><path d="M9 1h6l3 2.500-7 5.500L7 12Z" fill="#3f8fd8" opacity=".8" /><circle cx="11" cy="12" r="3.3" fill={TEAL} /></svg>
    </SideSlot>
    <SideSlot>
      <svg width="22" height="22" viewBox="0 0 22 22"><rect x="6" y="1" width="14" height="14" fill="#35b8f1" /><path d="M5 10h16v11H7q-2 0-2-2Z" fill="#1183d6" /><path d="m21 9-9 6 9 6Z" fill="#28a8ea" /><rect x="0" y="4.5" width="14" height="14" rx="1.5" fill="#0a64bd" /><ellipse cx="7" cy="11.5" rx="3" ry="3.4" fill="none" stroke="#fff" strokeWidth="2" /></svg>
    </SideSlot>
    <SideSlot>
      <svg width="22" height="18" viewBox="0 0 22 18"><path d="M0 2.500 22 1 15 17 9.500 11 5 15 4.500 8Z" fill="#2f86ea" /><path d="M22 1 4.500 8l1 7L8 10.500Z" fill="#f6a52a" /><path d="M0 2.500 22 1 4.500 8Z" fill="#45b4f2" /></svg>
    </SideSlot>
    <SideSlot $top={5}><Line s={18}><path d="M11 2v18M2 11h18" /></Line></SideSlot>
    <Grow />
    <RailRule $w={35} $c="#46a0a2" />
    <SideSlot $top={3}><Line s={22}><rect x="2" y="3.5" width="18" height="15" rx="2.5" /><path d="M13.500 3.500v15" /></Line></SideSlot>
    <SideSlot><Line s={22}><path d="M10 4.500H6Q3.500 4.500 3.500 7v9q0 2.500 2.500 2.500h9q2.500 0 2.500-2.500v-3.500M12.500 3H19v6.500M19 3l-9 9.500" /></Line></SideSlot>
    <SideSlot>
      <Line s={23}>
        <circle cx="11" cy="11" r="2.8" />
        <path d="M9 1.300h4l.7 3 1.800 1 3-.9 2 3.400-2.300 2.100v2.200l2.300 2.100-2 3.400-3-.9-1.800 1-.7 3H9l-.7-3-1.800-1-3 .9-2-3.400 2.300-2.100V9.900L1.500 7.800l2-3.400 3 .9 1.800-1Z" />
      </Line>
    </SideSlot>
  </SideRail>
);

const Tabs = () => (
  <TabRail>
    <TabSlot $h={42}>
      <svg width="20" height="20" viewBox="0 0 20 20"><rect x="1.5" y="1.5" width="17" height="16.5" rx="3" fill="none" stroke="#0a1415" strokeWidth="1.5" /><path d="M1.500 5.500h4.500v12.500H3q-1.500-1-1.500-2Z" fill="#0a1415" stroke="#0a1415" /><path d="M2 4h16" stroke="#0a1415" /></svg>
    </TabSlot>
    <TabSlot $h={45}>
      <svg width="21" height="21" viewBox="0 0 21 21">
        <defs><linearGradient id="vt" x1="0" y1="0" x2="1" y2="1"><stop offset="0" stopColor="#41d1ff" /><stop offset="1" stopColor="#bd34fe" /></linearGradient></defs>
        <path d="M0 2.500 10.500 4 21 2.500 10.500 20.500Z" fill="url(#vt)" /><path d="m8.500 1.500 6-1.500-1.500 5.500 3-.5-5 10 .5-6-3 .5Z" fill="#ffc31e" />
      </svg>
    </TabSlot>
    <TabSlot $h={45}><Ring size={20} bg="#6023d6" /></TabSlot>
    <TabSlot $h={45}><Ring size={21} /></TabSlot>
    <TabSlot $h={45}><ActiveTab><Ring size={21} /></ActiveTab></TabSlot>
    <TabSlot $h={4}><RailRule $w={40} $c="#123f41" /></TabSlot>
    <TabSlot $h={45}><Line s={20}><path d="M11 1.500v19M1.500 11h19" /></Line></TabSlot>
  </TabRail>
);

export default function App() {
  return (
    <>
      <Global />
      <Browser>
        <TitleBar>
          <TitleLabel><Ring size={21} />App viewer</TitleLabel>
          <Slot $gap={509} $w={14}><Line s={14} c="#3f8587" w={1.8}><path d="M1 11h20" /></Line></Slot>
          <Slot $gap={43} $w={16}><Line s={16} c="#3f8587" w={1.6}><rect x="2" y="2" width="18" height="18" rx="2" /></Line></Slot>
          <Slot $gap={42} $w={16}><Line s={16} c="#3f8587" w={1.6}><path d="m2 2 18 18M20 2 2 20" /></Line></Slot>
        </TitleBar>
        <Navigation />
        <Main>
          <Tabs />
          <Center>
            <BookmarkBar />
            <Viewer />
          </Center>
          <Sidebar />
        </Main>
      </Browser>
    </>
  );
}
